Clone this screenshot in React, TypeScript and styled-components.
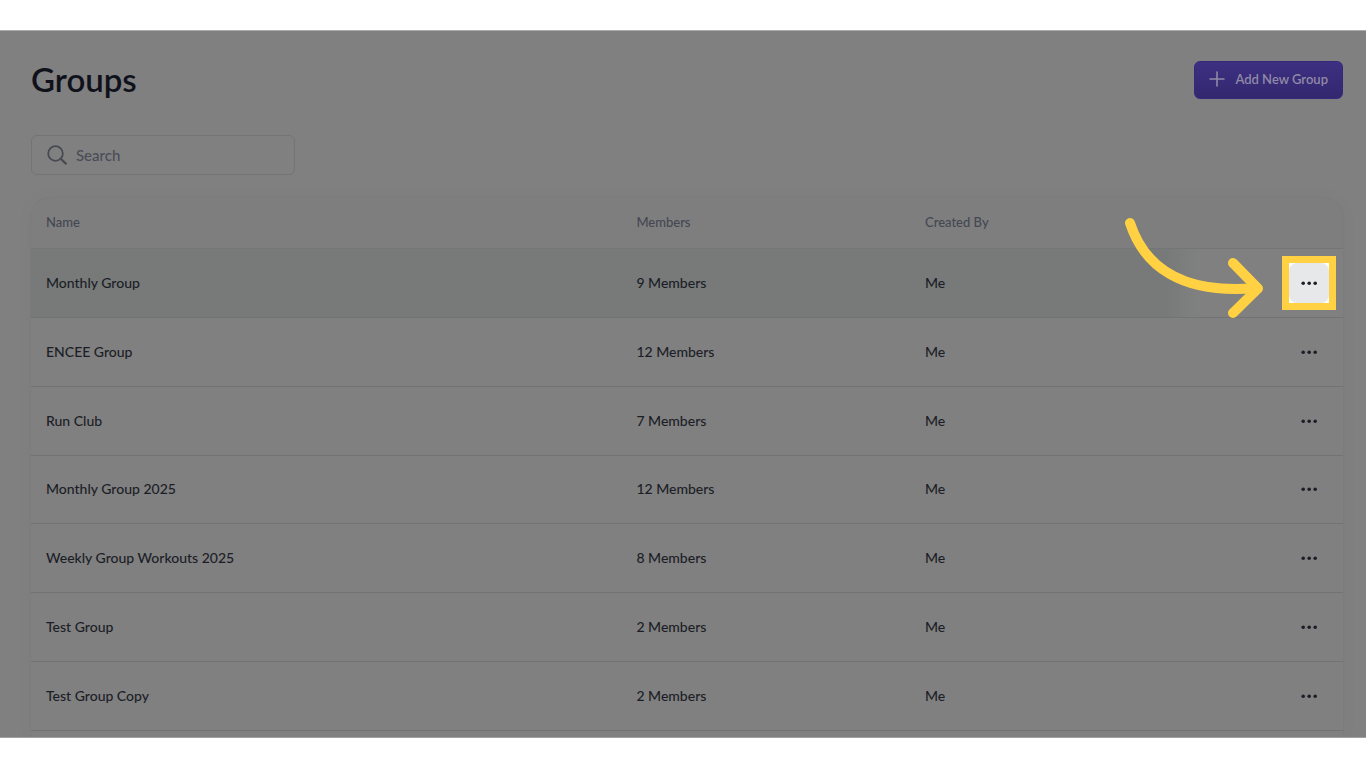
import React from "react";
import styled, { createGlobalStyle, css } from "styled-components";

const GlobalStyle = createGlobalStyle`
  *, *::before, *::after { box-sizing: border-box; }
  body {
    margin: 0;
    background: #ffffff;
    font-family: Lato, "Liberation Sans", sans-serif;
    color: #1c1e27;
  }
  button, input { font: inherit; }
`;

const Page = styled.div`
  display: flex;
  flex-direction: column;
  height: 100vh;
  padding: 30px 0;
`;

const Screen = styled.main`
  flex: 1;
  min-height: 0;
  display: flex;
  flex-direction: column;
  padding: 28px 23px 0 31px;
  background: #808080;
  border-top: 1px solid #a9acab;
  border-bottom: 1px solid #a0a0a0;
  overflow: hidden;
`;

const Header = styled.header`
  display: flex;
  flex: none;
  align-items: flex-end;
  justify-content: space-between;
  height: 40px;
`;

const Title = styled.h1`
  margin: 0;
  font-size: 33px;
  line-height: 40px;
  font-weight: 600;
  color: #10121b;
`;

const AddButton = styled.button`
  display: flex;
  align-items: center;
  gap: 10px;
  height: 38px;
  padding: 0 14px 2px;
  border: 1px solid #35297a;
  border-radius: 6px;
  background: linear-gradient(#3d3082, #33276f);
  color: #8f8aa6;
  font-size: 13px;
  line-height: 16px;
  font-weight: 600;
  white-space: nowrap;
`;

const SearchBox = styled.label`
  display: flex;
  flex: none;
  align-items: center;
  gap: 8px;
  width: 264px;
  height: 40px;
  margin-top: 36px;
  padding: 0 15px;
  border: 1px solid #727577;
  border-radius: 6px;
  color: #484a52;
`;

const SearchInput = styled.input`
  flex: 1;
  min-width: 0;
  padding: 0;
  border: 0;
  outline: 0;
  background: transparent;
  font-size: 15px;
  font-weight: 500;
  color: #1c1e27;
  &::placeholder { color: #4a4c57; opacity: 1; }
`;

const Card = styled.section`
  flex: 1;
  margin-top: 23px;
  border-radius: 20px 20px 0 0;
  box-shadow: 0 0 0 1px #7c7c7d, 0 0 20px rgba(0, 0, 0, 0.03);
`;

const Table = styled.table`
  width: 100%;
  height: 533px;
  table-layout: fixed;
  border-collapse: separate;
  border-spacing: 0;
  text-align: left;
`;

const HeadCell = styled.th<{ $width?: string }>`
  width: ${(p) => p.$width ?? "auto"};
  height: 51px;
  padding: 0 15px 2px;
  border-bottom: 1px solid #747676;
  background: #7e7e7e;
  font-size: 13px;
  font-weight: 500;
  color: #444753;
  &:first-child { border-top-left-radius: 20px; }
  &:last-child { border-top-right-radius: 20px; }
`;

const Row = styled.tr<{ $active?: boolean }>`
  height: 68px;
  background: ${(p) => (p.$active ? "#777a79" : "transparent")};
`;

const Cell = styled.td`
  padding: 0 15px 1px;
  border-bottom: 1px solid #717374;
  font-size: 14px;
  font-weight: 500;
`;

const ActionCell = styled(Cell)<{ $active?: boolean }>`
  padding: 0 14px;
  background: ${(p) =>
    p.$active ? "linear-gradient(90deg, #777a79, #808080 32px)" : "#808080"};
`;

const ActionSlot = styled.div<{ $active?: boolean }>`
  position: relative;
  width: 40px;
  height: 40px;
  margin-left: auto;
  ${(p) =>
    p.$active &&
    css`
      background: #ffffff;
      outline: 7px solid #ffd143;
    `}
`;

const MoreButton = styled.button<{ $active?: boolean }>`
  display: flex;
  align-items: center;
  justify-content: center;
  width: 100%;
  height: 100%;
  padding: 0;
  border: 0;
  border-radius: 8px;
  background: ${(p) => (p.$active ? "#e7e8ea" : "transparent")};
  color: #1c1e27;
`;

const Arrow = styled.svg`
  position: absolute;
  right: 65px;
  top: -48px;
  pointer-events: none;
`;

const groups = [
  { name: "Monthly Group", members: 9 },
  { name: "ENCEE Group", members: 12 },
  { name: "Run Club", members: 7 },
  { name: "Monthly Group 2025", members: 12 },
  { name: "Weekly Group Workouts 2025", members: 8 },
  { name: "Test Group", members: 2 },
  { name: "Test Group Copy", members: 2 },
];

const PlusIcon = () => (
  <svg width="16" height="16" viewBox="0 0 16 16" fill="none" stroke="currentColor" strokeWidth="1.6" strokeLinecap="round" aria-hidden="true">
    <path d="M8 1v14M1 8h14" />
  </svg>
);

const SearchIcon = () => (
  <svg width="21" height="20" viewBox="0 0 21 20" fill="none" stroke="currentColor" strokeWidth="1.8" strokeLinecap="round" aria-hidden="true">
    <circle cx="8.5" cy="8.5" r="7.3" />
    <path d="M13.8 13.8l5 4.8" strokeWidth="2.2" />
  </svg>
);

const DotsIcon = () => (
  <svg width="18" height="6" viewBox="0 0 18 6" fill="currentColor" aria-hidden="true">
    <circle cx="3.2" cy="3.2" r="1.8" />
    <circle cx="9.2" cy="3.2" r="1.8" />
    <circle cx="15.2" cy="3.2" r="1.8" />
  </svg>
);

const PointerArrow = () => (
  <Arrow width="141" height="106" viewBox="0 0 141 106" fill="none" stroke="#ffd143" strokeWidth="10" strokeLinecap="round" strokeLinejoin="round" aria-hidden="true">
    <path d="M7 8C21 51 58 80 134 73" />
    <path d="M110 48l25 25.5L110 98" />
  </Arrow>
);

export default function App() {
  return (
    <Page>
      <GlobalStyle />
      <Screen>
        <Header>
          <Title>Groups</Title>
          <AddButton type="button">
            <PlusIcon />
            Add New Group
          </AddButton>
        </Header>
        <SearchBox>
          <SearchIcon />
          <SearchInput type="text" placeholder="Search" aria-label="Search" />
        </SearchBox>
        <Card>
          <Table>
            <thead>
              <tr>
                <HeadCell $width="45%">Name</HeadCell>
                <HeadCell $width="22%">Members</HeadCell>
                <HeadCell>Created By</HeadCell>
                <HeadCell $width="178px" aria-label="Actions" />
              </tr>
            </thead>
            <tbody>
              {groups.map((group, i) => {
                const active = i === 0;
                return (
                  <Row key={group.name} $active={active}>
                    <Cell>{group.name}</Cell>
                    <Cell>{group.members} Members</Cell>
                    <Cell>Me</Cell>
                    <ActionCell $active={active}>
                      <ActionSlot $active={active}>
                        <MoreButton type="button" $active={active} aria-label={`Actions for ${group.name}`}>
                          <DotsIcon />
                        </MoreButton>
                        {active && <PointerArrow />}
                      </ActionSlot>
                    </ActionCell>
                  </Row>
                );
              })}
            </tbody>
          </Table>
        </Card>
      </Screen>
    </Page>
  );
}
